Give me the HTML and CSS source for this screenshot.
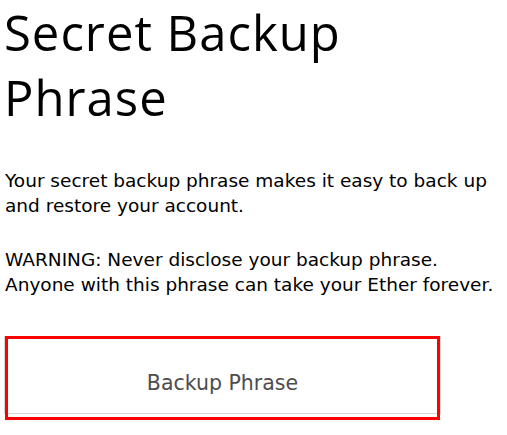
FILE: index.html
```html
<!DOCTYPE html>
<html lang="en">
<head>
<meta charset="UTF-8" />
<meta name="viewport" content="width=device-width, initial-scale=1" />
<title>Secret Backup Phrase</title>
<link rel="stylesheet" href="styles.css">
</head>
<body>

<div class="section">
  <h1 class="title">Secret Backup Phrase</h1>
  <p class="desc">Your secret backup phrase makes it easy to back up and restore your account.</p>
  <p class="desc">WARNING: Never disclose your backup phrase. Anyone with this phrase can take your Ether forever.</p>
  <div class="highlight">
    <button class="backupBtn">Backup Phrase</button>
  </div>
</div>

</body>
</html>
```

FILE: styles.css
```css
body {
  margin: 0;
  padding: 0 4px;
  background: #ffffff;
  font-family: "DejaVu Sans", sans-serif;
  color: #000000;
}
.section {
  width: 495px;
}
.title {
  margin: 0;
  font-family: "Open Sans", sans-serif;
  font-size: 49px;
  font-weight: 400;
  letter-spacing: 1px;
  line-height: 65px;
  width: 400px;
}
.desc {
  margin: 38px 0 0 1px;
  font-size: 18.5px;
  line-height: 25px;
}
.desc + .desc {
  margin-top: 29px;
}
.highlight {
  margin-top: 39px;
  width: 437px;
  height: 84px;
  position: relative;
}
.backupBtn {
  display: block;
  width: 437px;
  height: 78px;
  margin-top: 7px;
  padding: 16px 0 0 0;
  background: #ffffff;
  border: 1px solid #d6d6d6;
  color: #4d4d4d;
  font-family: "DejaVu Sans", sans-serif;
  font-size: 20.5px;
}
.highlight::after {
  content: "";
  position: absolute;
  left: 1px;
  top: 0;
  width: 435px;
  height: 84px;
  box-sizing: border-box;
  border: 3px solid #ff0000;
}
```
